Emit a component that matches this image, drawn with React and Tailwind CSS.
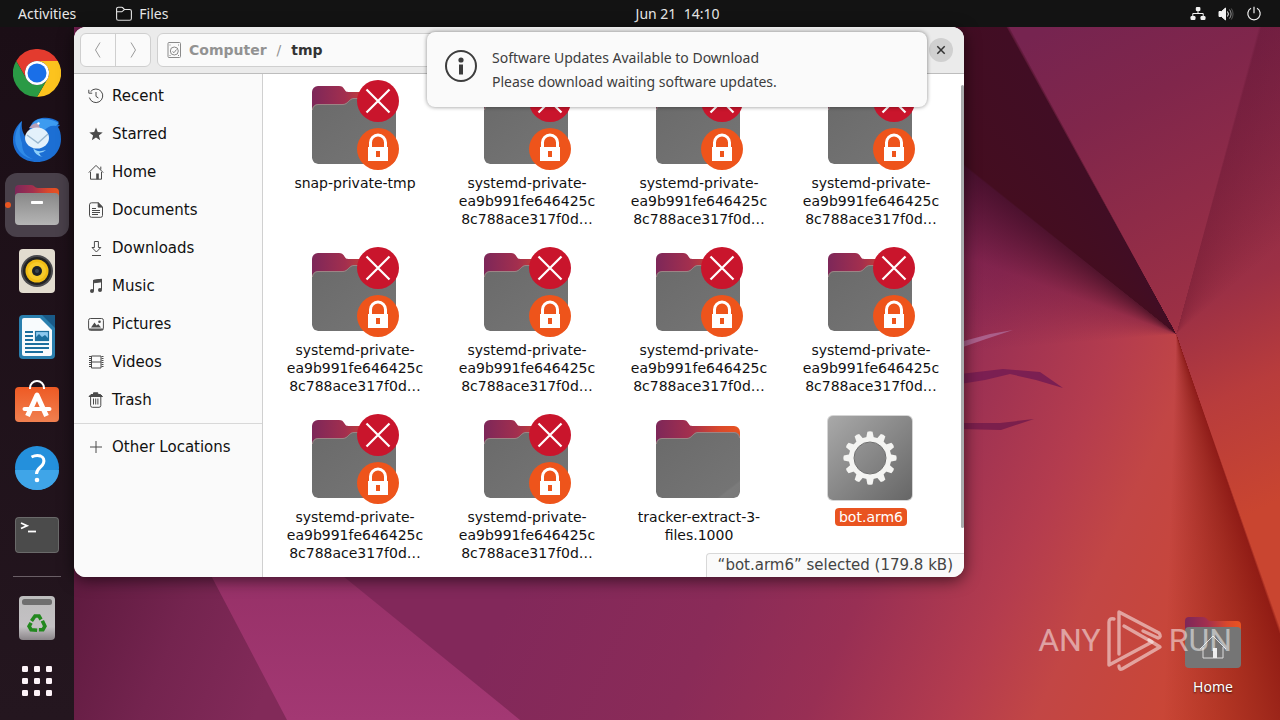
const places = [
  { name: "Recent", icon: "recent" },
  { name: "Starred", icon: "starred" },
  { name: "Home", icon: "home" },
  { name: "Documents", icon: "documents" },
  { name: "Downloads", icon: "downloads" },
  { name: "Music", icon: "music" },
  { name: "Pictures", icon: "pictures" },
  { name: "Videos", icon: "videos" },
  { name: "Trash", icon: "trash" },
];

const systemd = ["systemd-private-", "ea9b991fe646425c", "8c788ace317f0d…"];

const files = [
  { id: 1, lines: ["snap-private-tmp"], type: "locked" },
  { id: 2, lines: systemd, type: "locked" },
  { id: 3, lines: systemd, type: "locked" },
  { id: 4, lines: systemd, type: "locked" },
  { id: 5, lines: systemd, type: "locked" },
  { id: 6, lines: systemd, type: "locked" },
  { id: 7, lines: systemd, type: "locked" },
  { id: 8, lines: systemd, type: "locked" },
  { id: 9, lines: systemd, type: "locked" },
  { id: 10, lines: systemd, type: "locked" },
  { id: 11, lines: ["tracker-extract-3-", "files.1000"], type: "folder" },
  { id: 12, lines: ["bot.arm6"], type: "binary", selected: true },
];

const placeIcons = {
  recent: (
    <>
      <path d="M2.6 3.6A6.8 6.8 0 1 1 1.4 9.6" />
      <path d="M.8 1.8v3.4h3.4" />
      <path d="M8 4v4.4l2.4 1.6" />
    </>
  ),
  starred: (
    <path d="M8 1.5l1.8 4.6 4.9.3-3.8 3.1 1.3 4.8L8 11.6l-4.2 2.7 1.3-4.8L1.3 6.4l4.9-.3z" fill="#4a4a4a" stroke="none" />
  ),
  home: (
    <>
      <path d="M.8 8.6L8 1.4l7.2 7.2M12.8 2.6v3" />
      <path d="M2.5 8v7.2h11V8" />
      <path d="M8.2 9.5h2.6v5.7H8.2z" fill="#4a4a4a" stroke="none" />
    </>
  ),
  documents: (
    <>
      <path d="M3.5.8h6.7l4.3 4.3v8.4a1.8 1.8 0 0 1-1.8 1.8H3.5a2 2 0 0 1-2-2V2.8a2 2 0 0 1 2-2z" />
      <path d="M10.2.8v4.3h4.3z" fill="#4a4a4a" />
      <path d="M4 6.5h4M4 8.5h8M4 10.5h8M4 12.5h6" />
    </>
  ),
  downloads: (
    <>
      <path d="M6.4 1.5h4v6h2.4L8.4 12 4 7.5h2.4z" />
      <path d="M4 15.5h9" />
    </>
  ),
  music: (
    <>
      <path d="M5.5 13V2.5L13.5 1.3V11.5" />
      <path d="M5.5 2.3l8-1v2.5l-8 1z" fill="#4a4a4a" />
      <circle cx="4" cy="13" r="2" fill="#4a4a4a" stroke="none" />
      <circle cx="12" cy="12" r="2" fill="#4a4a4a" stroke="none" />
    </>
  ),
  pictures: (
    <>
      <rect x=".6" y="2.5" width="14.8" height="11.8" rx="1.8" />
      <path d="M3 11.5l3.5-5 2.2 3 1.5-1.5 2.8 3.5z" fill="#4a4a4a" stroke="none" />
      <path d="M1 13.2h14" strokeWidth="1.4" />
      <circle cx="11.5" cy="5.8" r="1.3" fill="#4a4a4a" stroke="none" />
    </>
  ),
  videos: (
    <>
      <path d="M3.5 2h9.5v12H3.5zM3.5 8h9.5" />
      <path d="M2 2v12M14.5 2v12" strokeWidth="2" strokeDasharray="1 1" />
    </>
  ),
  trash: (
    <>
      <path d="M2.6 5v8.5a1.8 1.8 0 0 0 1.8 1.8h6.6a1.8 1.8 0 0 0 1.8-1.8V5" />
      <path d="M1 4.5L3 2.5h9.5l2 2zM5.5 2V.8h4.3V2" fill="#4a4a4a" />
      <path d="M5.5 6.5v6M7.7 6.5v6M9.9 6.5v6" />
    </>
  ),
  other: <path d="M8 2v12M2 8h12" />,
};

function PlaceIcon({ name }) {
  return (
    <svg viewBox="0 0 16 16" className="h-4 w-4 shrink-0" fill="none" stroke="#4a4a4a" strokeWidth="1">
      {placeIcons[name]}
    </svg>
  );
}

function FileIcon({ type }) {
  if (type === "binary") {
    return (
      <svg viewBox="0 0 96 96" className="h-24 w-24">
        <rect x="4" y="4" width="86" height="86" rx="6" fill="#d5d5d5" />
        <rect x="5" y="5" width="84" height="84" rx="5" fill="url(#binaryBack)" />
        <g fill="#f4f4f2">
          {[0, 30, 60, 90, 120, 150, 180, 210, 240, 270, 300, 330].map((a) => (
            <path key={a} d="M43 28l1.4-7.2q2.600-1 5.200 0L51 28z" transform={`rotate(${a} 47 47)`} />
          ))}
        </g>
        <circle cx="47" cy="47" r="18.5" fill="none" stroke="#f4f4f2" strokeWidth="5.5" />
        <circle cx="47" cy="47" r="16" fill="none" stroke="#6e6e6e" strokeWidth="1" />
      </svg>
    );
  }
  return (
    <svg viewBox="0 0 96 96" className="h-24 w-24">
      <path d="M5 32V15a6 6 0 0 1 6-6h21c3 0 4 1 5.5 3.5S40 15 43 15h40a6 6 0 0 1 6 6v12z" fill="url(#folderBack)" />
      <path d="M5 33a6 6 0 0 1 6-6h25c5 0 6-6 11-6h36a6 6 0 0 1 6 6v54a6 6 0 0 1-6 6H11a6 6 0 0 1-6-6z" fill="url(#folderFront)" clipPath="url(#folderClip)" />
      <path d="M5.5 33a5.5 5.5 0 0 1 5.5-5.5h25c5 0 6-6 11-6h36a5.5 5.5 0 0 1 5.5 5.5" fill="none" stroke="#a98a8c" strokeWidth=".8" />
      {type === "locked" && (
        <>
          <circle cx="71" cy="24" r="21" fill="#c9152c" />
          <path d="M59.5 12.5l23 23M82.5 12.5l-23 23" stroke="#fff" strokeWidth="2.2" />
          <circle cx="71" cy="72" r="21" fill="#ee541b" />
          <path d="M63.5 71v-5.5a7.5 7.5 0 0 1 15 0V71" fill="none" stroke="#fff" strokeWidth="3" />
          <path d="M61 70h20v14H61z" fill="#fff" />
          <path d="M69 74h4v6h-4z" fill="#ee541b" />
        </>
      )}
    </svg>
  );
}

const dockApps = [
  {
    name: "Google Chrome",
    art: (
      <>
        <path d="M24 12H44.8A24 24 0 0 0 3.2 12L13.6 30A12 12 0 0 1 24 12z" fill="#e33b2e" />
        <path d="M24 12H44.8A24 24 0 0 1 24 48L34.4 30A12 12 0 0 0 24 12z" fill="#fcc31e" />
        <path d="M13.6 30L3.2 12A24 24 0 0 0 24 48L34.4 30A12 12 0 0 1 13.6 30z" fill="#2a9a45" />
        <circle cx="24" cy="24" r="12" fill="#fff" />
        <circle cx="24" cy="24" r="9.5" fill="#1a6fe8" />
      </>
    ),
  },
  {
    name: "Thunderbird",
    art: (
      <>
        <path d="M9 6C4 10 0 16 0 25c0 13 10 22 24 22s24-10 24-23c0-5-1-9-3-12l2-2-4-1 3-2c-7-5-15-5-21-3-6 2-8 7-9 12-1 3-2 5-3 7-3-5-5-9-4-17z" fill="#1c6fd4" />
        <path d="M9 6C3 14 0 23 4 32c3 7 9 11 16 12-8-3-11-8-11-16C6 21 6 13 9 6z" fill="#2f8ae6" />
        <path d="M18 12c2-6 7-9 13-8 6 0 11 2 15 4l-3 3c-5-1-9 1-12 5-4-2-8-3-13-4z" fill="#3d9bf0" />
        <path d="M16 13c3-4 6-5 9-5l2 5z" fill="#b8a0b8" />
        <path d="M20 33q4 5 13 2-3 3-7 3 1 3 4 4-8-1-10-9z" fill="#8fd0fa" />
        <ellipse cx="24" cy="23" rx="12" ry="10.5" fill="#e3f1fb" />
        <path d="M14 20l11 8 10-9" fill="none" stroke="#9bb8cf" strokeWidth="1.4" />
        <circle cx="25.5" cy="8.5" r="1.2" fill="#fff" />
      </>
    ),
  },
  {
    name: "Files",
    active: true,
    art: (
      <>
        <path d="M2 14V8a4 4 0 0 1 4-4h12c4 0 3 3 7 3h17a4 4 0 0 1 4 4v8z" fill="url(#folderBack)" />
        <rect x="2" y="12" width="44" height="32" rx="4" fill="url(#dockGrey)" />
        <rect x="18" y="20" width="12" height="3" rx=".8" fill="#fff" />
      </>
    ),
  },
  {
    name: "Rhythmbox",
    art: (
      <>
        <rect x="6" y="2" width="36" height="44" rx="4" fill="#e2dccf" />
        <circle cx="24" cy="24" r="16" fill="#4a4a4d" />
        <circle cx="24" cy="24" r="14" fill="#222" />
        <circle cx="24" cy="24" r="11.5" fill="#f2bd13" />
        <circle cx="24" cy="24" r="9" fill="#f7cb2b" />
        <circle cx="24" cy="24" r="5" fill="#1d2228" />
        <circle cx="24" cy="24" r="2" fill="#3c4650" />
      </>
    ),
  },
  {
    name: "LibreOffice Writer",
    art: (
      <>
        <path d="M10 2h22l10 12v28a4 4 0 0 1-4 4H10a4 4 0 0 1-4-4V6a4 4 0 0 1 4-4z" fill="#2a7fae" />
        <path d="M29 2h13v13z" fill="#195a87" />
        <path d="M11 5h16l12 12v24a2 2 0 0 1-2 2H11a2 2 0 0 1-2-2V7a2 2 0 0 1 2-2z" fill="#f8fbfd" />
        <path d="M12 19h8M12 23h8M12 27h8M12 31h24M12 35h24M12 39h18" stroke="#1c6f9e" strokeWidth="1.8" />
        <rect x="22.5" y="18.5" width="13" height="9" fill="#8cc8ee" stroke="#1c6f9e" strokeWidth="1.2" />
        <path d="M23 27v-3l3-3 3 3 3-2 3 3v2z" fill="#1c6f9e" />
      </>
    ),
  },
  {
    name: "Ubuntu Software",
    art: (
      <>
        <rect x="2" y="8" width="44" height="35" rx="4" fill="url(#softBack)" />
        <path d="M17 10V9a7 7 0 0 1 14 0v1" fill="none" stroke="#fff" strokeWidth="2" />
        <path d="M14.5 37L24 16l9.5 21" fill="none" stroke="#fff" strokeWidth="5" strokeLinejoin="round" />
        <path d="M11.5 30h25" stroke="#fff" strokeWidth="4" strokeLinecap="round" />
      </>
    ),
  },
  {
    name: "Help",
    art: (
      <>
        <circle cx="24" cy="23" r="22" fill="#2490dc" />
        <path d="M2 25a22 20 0 0 0 44 0z" fill="#3fa5e8" />
        <path d="M18.5 12q5-2.5 9-1 4.5 2 3 7-.6 2-3.5 4.500-3.500 3-3.500 6.500" fill="none" stroke="#fff" strokeWidth="3" />
        <circle cx="24" cy="35" r="2.3" fill="#fff" />
      </>
    ),
  },
  {
    name: "Terminal",
    art: (
      <>
        <rect x="2" y="6" width="44" height="36" rx="4" fill="#6a6a6a" />
        <rect x="3" y="7" width="42" height="34" rx="3" fill="#4b4b4b" />
        <path d="M8 12l6 2.7-6 2.8" fill="none" stroke="#fff" strokeWidth="1.8" />
        <path d="M15 20.5h8" stroke="#fff" strokeWidth="1.8" />
      </>
    ),
  },
];

function DockButton({ name, active, children }) {
  return (
    <button
      aria-label={name}
      className={`relative flex h-16 w-16 shrink-0 items-center justify-center rounded-xl ${active ? "bg-[#49404a]" : ""}`}
    >
      {active && <span className="absolute left-0 h-1.5 w-1.5 rounded-full bg-[#e95420]" />}
      <svg viewBox="0 0 48 48" className="h-12 w-12">
        {children}
      </svg>
    </button>
  );
}

function Dock() {
  return (
    <nav className="flex w-[74px] shrink-0 flex-col items-center bg-linear-to-b from-[#1b0e16] to-[#24161f] pt-[14px]">
      <div className="flex flex-col gap-0.5">
        {dockApps.map((app) => (
          <DockButton key={app.name} name={app.name} active={app.active}>
            {app.art}
          </DockButton>
        ))}
      </div>
      <div className="my-[9px] h-px w-12 bg-[#6a5f66]" />
      <DockButton name="Trash">
        <rect x="6" y="2" width="36" height="44" rx="4" fill="url(#trashBack)" />
        <rect x="9" y="5" width="30" height="6" rx="2.5" fill="#6f6f6f" />
        <g fill="none" stroke="#23881f" strokeWidth="3.6">
          <path d="M18.5 27l3.5-5h4l2 3.5" />
          <path d="M18.5 27l3.5-5h4l2 3.5" transform="rotate(120 24 30)" />
          <path d="M18.5 27l3.5-5h4l2 3.5" transform="rotate(240 24 30)" />
        </g>
      </DockButton>
      <DockButton name="Show Applications">
        {[8, 20, 32].map((y) =>
          [9, 21, 33].map((x) => (
            <rect key={`${x}-${y}`} x={x} y={y} width="6" height="6" rx="1.3" fill="#fdf3f8" />
          ))
        )}
      </DockButton>
    </nav>
  );
}

function Wallpaper() {
  return (
    <>
      <svg viewBox="0 0 1280 720" preserveAspectRatio="none" className="absolute inset-0 h-full w-full">
        <defs>
          <linearGradient id="wallMain" gradientUnits="userSpaceOnUse" x1="560" y1="480" x2="1200" y2="760">
            <stop offset="0" stopColor="#82285a" />
            <stop offset=".28" stopColor="#8a2b58" />
            <stop offset=".46" stopColor="#982f54" />
            <stop offset=".65" stopColor="#b43c4e" />
            <stop offset=".76" stopColor="#c24645" />
            <stop offset="1" stopColor="#cc4630" />
          </linearGradient>
          <linearGradient id="wallTop" gradientUnits="userSpaceOnUse" x1="1050" y1="27" x2="1280" y2="500">
            <stop offset="0" stopColor="#762450" />
            <stop offset=".2" stopColor="#80264b" />
            <stop offset=".6" stopColor="#9c3045" />
            <stop offset=".78" stopColor="#b83c3c" />
            <stop offset="1" stopColor="#c94530" />
          </linearGradient>
          <linearGradient id="wallLeft" gradientUnits="userSpaceOnUse" x1="74" y1="600" x2="270" y2="680">
            <stop offset="0" stopColor="#601b40" />
            <stop offset=".5" stopColor="#74244f" />
            <stop offset="1" stopColor="#822a59" />
          </linearGradient>
          <linearGradient id="wallBand" x1="0" y1="0" x2="0" y2="1">
            <stop offset="0" stopColor="#922e63" />
            <stop offset="1" stopColor="#a33873" />
          </linearGradient>
          <linearGradient id="folderBack" x1="0" y1="0" x2="1" y2="0">
            <stop offset="0" stopColor="#7d2759" />
            <stop offset=".4" stopColor="#a32f4e" />
            <stop offset=".75" stopColor="#d9482c" />
            <stop offset="1" stopColor="#e95420" />
          </linearGradient>
          <linearGradient id="folderFront" x1="0" y1="0" x2="1" y2="1">
            <stop offset="0" stopColor="#6a6a6a" />
            <stop offset=".86" stopColor="#747474" />
            <stop offset=".88" stopColor="#7b7b7b" />
            <stop offset="1" stopColor="#797979" />
          </linearGradient>
          <clipPath id="folderClip">
            <rect x="5" y="0" width="84" height="87" rx="6" />
          </clipPath>
          <linearGradient id="binaryBack" x1="0" y1="0" x2="1" y2="1">
            <stop offset="0" stopColor="#a9a9a9" />
            <stop offset="1" stopColor="#666666" />
          </linearGradient>
          <linearGradient id="dockGrey" x1="0" y1="0" x2="0" y2="1">
            <stop offset="0" stopColor="#888888" />
            <stop offset="1" stopColor="#b5b5b5" />
          </linearGradient>
          <linearGradient id="softBack" x1="0" y1="0" x2="0" y2="1">
            <stop offset="0" stopColor="#ee5a24" />
            <stop offset="1" stopColor="#f08050" />
          </linearGradient>
          <linearGradient id="trashBack" x1="0" y1="0" x2="0" y2="1">
            <stop offset="0" stopColor="#bdbdbd" />
            <stop offset=".7" stopColor="#c4c1c4" />
            <stop offset="1" stopColor="#8a8589" />
          </linearGradient>
        </defs>
        <path d="M0 0h1280v720H0z" fill="url(#wallMain)" />
        <path d="M0 520h182l105 200H0z" fill="url(#wallLeft)" />
        <path d="M182 520h92l246 200H287z" fill="url(#wallBand)" />
        <path d="M993 0h287v630L1176 334z" fill="url(#wallTop)" />
        <path d="M960 342l30-8 23-4-27 9-26 9z" fill="#b0648f" />
        <path d="M960 374l43-5 37 3 23 16-27-8-26-6-25 6-25 4z" fill="#7b1f52" />
        <path d="M960 423h40l34-4-33 11-41-1z" fill="#7b1f4c" />
      </svg>
      <div className="absolute inset-0 bg-[conic-gradient(at_91.9%_46.4%,transparent_15deg,rgba(70,5,30,.24)_15.5deg,transparent_50deg,transparent_160.5deg,rgba(120,10,8,.7)_161deg,rgba(120,14,8,.5)_167deg,transparent_182deg,transparent_265deg,rgba(80,10,60,.3)_290deg,rgba(45,5,30,.7)_308.3deg,#440d20_308.7deg,#410d24_331deg,transparent_331.5deg)]" />
    </>
  );
}

function TopBar() {
  return (
    <header className="relative flex h-[27px] shrink-0 items-center bg-[#131313] px-[18px] font-['Noto_Sans',sans-serif] text-sm text-[#e8e8e8]">
      <div className="flex flex-1 items-center gap-10">
        <button>Activities</button>
        <button className="flex items-center gap-[7px]">
          <svg viewBox="0 0 16 16" className="h-4 w-4" fill="none" stroke="currentColor" strokeWidth="1.1">
            <path d="M.6 12.5V3a1.8 1.8 0 0 1 1.8-1.8h3.2c2 0 1.5 2.3 3.5 2.3h4.5a1.8 1.8 0 0 1 1.8 1.8v7.2a1.8 1.8 0 0 1-1.8 1.8H2.4A1.8 1.8 0 0 1 .6 12.5zM.6 5.8h5.2l2.600-2.200" />
          </svg>
          Files
        </button>
      </div>
      <button className="pl-[75px] whitespace-pre">Jun 21  14:10</button>
      <div className="flex flex-1 items-center justify-end gap-3">
        <svg viewBox="0 0 16 16" className="h-4 w-4" fill="#f2f2f2">
          <rect x="5.8" y="1" width="4.6" height="4" rx="1" />
          <rect x=".5" y="10" width="5" height="4" rx="1.2" />
          <rect x="10.5" y="10" width="5" height="4" rx="1.2" />
          <path d="M8 5v2.5M2.8 10.5v-3h10.4v3" fill="none" stroke="#f2f2f2" />
        </svg>
        <svg viewBox="0 0 16 16" className="h-4 w-4" fill="none" stroke="#f2f2f2">
          <path d="M1 5.5h2.5L7.5 2v12l-4-3.5H1z" fill="#f2f2f2" />
          <path d="M9.5 5.5q1.8 2.5 0 5" />
          <path d="M11.5 3.5q3.2 4.5 0 9" opacity=".6" />
          <path d="M13.3 2.5q3.5 5.5 0 11" opacity=".3" />
        </svg>
        <svg viewBox="0 0 16 16" className="h-4 w-4" fill="none" stroke="#f2f2f2" strokeWidth="1.2">
          <path d="M5 2.3a6.2 6.2 0 1 0 6 0M8 .8v6.4" />
        </svg>
      </div>
    </header>
  );
}

function FilesWindow() {
  return (
    <section className="relative w-full max-w-[890px] overflow-hidden rounded-xl bg-white text-[#111] shadow-[0_3px_16px_rgba(0,0,0,.6)]">
      <div className="flex h-[47px] items-center gap-1.5 border-b border-[#bdbdbd] bg-[#ebebeb] pr-[11px] pl-1.5">
        <div className="flex h-[34px] overflow-hidden rounded-md border border-[#cfcfcf] bg-[#fafafa]">
          <button aria-label="Back" className="flex w-[35px] items-center justify-center border-r border-[#cfcfcf]">
            <svg viewBox="0 0 16 16" className="h-4 w-4" fill="none" stroke="#999">
              <path d="M10 .5L5.5 8l4.5 7.5" />
            </svg>
          </button>
          <button aria-label="Forward" className="flex w-[34px] items-center justify-center">
            <svg viewBox="0 0 16 16" className="h-4 w-4" fill="none" stroke="#999">
              <path d="M6 .5L10.5 8 6 15.5" />
            </svg>
          </button>
        </div>
        <div className="mr-20 flex h-[34px] flex-1 items-center rounded-md border border-[#cfcfcf] bg-[#fafafa] px-2 text-sm font-bold">
          <svg viewBox="0 0 16 16" className="mr-[7px] h-4 w-4" fill="none" stroke="#8a8a8a">
            <rect x="2" y=".5" width="12.5" height="15" rx="1" />
            <circle cx="8.3" cy="9" r="4" />
            <path d="M6.5 9.5L8 10.700l2.500-3.200M3.500 3h1M12 3h1M3.500 13.500h1M12 13.500h1" />
          </svg>
          <button className="text-[#929292]">Computer</button>
          <span className="mx-2.5 font-normal text-[#929292]">/</span>
          <button className="text-[#333]">tmp</button>
        </div>
        <button aria-label="Close" className="flex h-6 w-6 items-center justify-center rounded-full bg-[#d0d0d0]">
          <svg viewBox="0 0 16 16" className="h-4 w-4" stroke="#333" strokeWidth="1.5">
            <path d="M4.3 4.3l7.4 7.4M11.7 4.3l-7.4 7.4" />
          </svg>
        </button>
      </div>

      <div className="flex">
        <aside className="w-[189px] shrink-0 border-r border-[#d0d0d0] bg-[#fafafa] py-[3px] text-[15px]">
          {places.map((place) => (
            <button key={place.name} className="flex h-[38px] w-full items-center gap-2 px-[14px]">
              <PlaceIcon name={place.icon} />
              {place.name}
            </button>
          ))}
          <hr className="my-1 border-[#d8d8d8]" />
          <button className="flex h-[38px] w-full items-center gap-2 px-[14px]">
            <PlaceIcon name="other" />
            Other Locations
          </button>
        </aside>

        <main className="grid flex-1 grid-cols-4 gap-y-4 pt-[3px] pr-[7px] pb-[15px] pl-1.5">
          {files.map((file) => (
            <button key={file.id} className="flex flex-col items-center text-sm leading-[18px]">
              <FileIcon type={file.type} />
              <span className="mt-px flex h-[54px] flex-col items-center">
                {file.lines.map((line) => (
                  <span key={line} className={file.selected ? "rounded bg-[#e95420] px-1 text-white" : ""}>
                    {line}
                  </span>
                ))}
              </span>
            </button>
          ))}
        </main>
      </div>

      <div className="absolute top-[58px] right-0 bottom-[49px] w-[3px] rounded bg-[#a9acad]" />
      <div className="absolute right-0 bottom-0 h-6 rounded-tl border-t border-l border-[#d8d8d8] bg-[#fafafa] px-[11px] text-[15px] leading-[22px] text-[#444]">
        “bot.arm6” selected (179.8 kB)
      </div>
    </section>
  );
}

function Notification() {
  return (
    <div
      role="status"
      className="absolute inset-x-0 top-[5px] mx-auto flex h-[75px] w-[500px] items-center gap-[15px] rounded-lg bg-[#fafafa] px-[18px] font-['Noto_Sans',sans-serif] text-sm leading-6 text-[#3d3d3d] shadow-[0_0_4px_rgba(0,0,0,.45)]"
    >
      <svg viewBox="0 0 32 32" className="mb-2 h-8 w-8 shrink-0">
        <circle cx="16" cy="16" r="15" fill="none" stroke="#3d3d3d" strokeWidth="2" />
        <circle cx="16" cy="10" r="2.6" fill="#3d3d3d" />
        <path d="M14 14.5h4v10h-4z" fill="#3d3d3d" />
      </svg>
      <div>
        <p>Software Updates Available to Download</p>
        <p>Please download waiting software updates.</p>
      </div>
    </div>
  );
}

function Watermark() {
  return (
    <div className="absolute right-12 bottom-12 flex items-center gap-1.5 font-['Roboto',sans-serif] text-[32px] leading-none text-white/50">
      <span>ANY</span>
      <svg viewBox="0 0 56 64" className="h-16 w-14" fill="none" stroke="currentColor" strokeWidth="3.4" strokeLinejoin="round" strokeLinecap="round">
        <path d="M12 46V4l40 21q3 4-1 5L36 23" />
        <path d="M7 11q-5-1-5 3v43l43-23L17 18" />
        <path d="M12 58q0 4 3 3l38-22-11-7" />
      </svg>
      <span>RUN</span>
    </div>
  );
}

export default function App() {
  return (
    <div className="relative flex min-h-screen flex-col overflow-hidden font-['DejaVu_Sans',sans-serif]">
      <Wallpaper />
      <TopBar />
      <div className="relative flex flex-1">
        <Dock />
        <div className="relative flex-1">
          <FilesWindow />
          <Notification />
          <button className="absolute right-[39px] bottom-[23px] flex flex-col items-center font-['Noto_Sans',sans-serif] text-sm text-white [text-shadow:0_1px_2px_rgba(0,0,0,.7)]">
            <svg viewBox="0 0 56 52" className="mb-2 h-[52px] w-14">
              <path d="M0 14V4a4 4 0 0 1 4-4h14c4 0 4 4 8 4h26a4 4 0 0 1 4 4v8z" fill="url(#folderBack)" />
              <rect y="10" width="56" height="41" rx="4" fill="#757575" />
              <path d="M15 32l13-13 13 13M18 30v11h20V30" fill="none" stroke="#ddd" />
              <path d="M28 31h4v10h-4z" fill="#eee" />
            </svg>
            Home
          </button>
          <Watermark />
        </div>
      </div>
    </div>
  );
}
